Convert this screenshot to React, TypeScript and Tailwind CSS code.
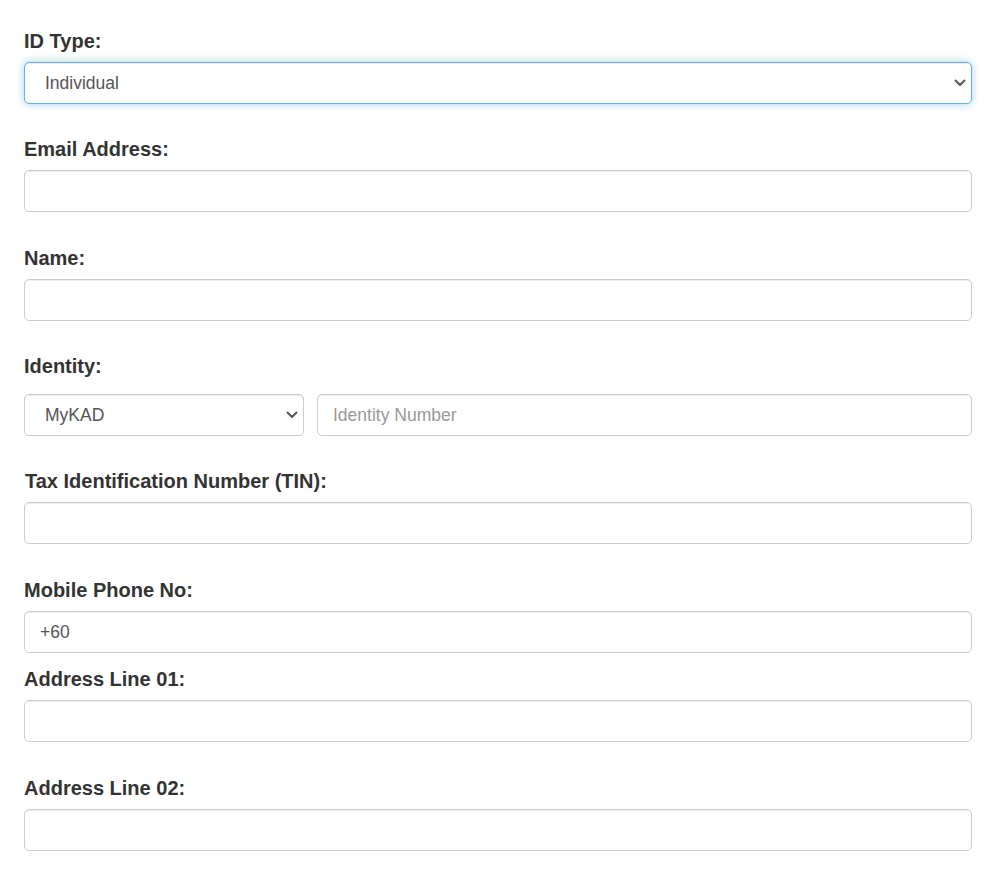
import React from "react";

const inputBase =
  "block w-full h-[42px] rounded-[5px] border border-[#cccccc] bg-white px-[15px] text-[17.5px] text-[#555555] outline-none shadow-[inset_0_1px_1px_rgba(0,0,0,0.075)] placeholder:text-[#999999]";

function Chevron() {
  return (
    <svg
      className="pointer-events-none absolute right-[6px] top-1/2 -translate-y-1/2"
      width="12"
      height="8"
      viewBox="0 0 12 8"
      fill="none"
    >
      <path d="M1.5 1.5 L6 6 L10.5 1.5" stroke="#555555" strokeWidth="2" strokeLinecap="round" strokeLinejoin="round" />
    </svg>
  );
}

function Select({ value, focus, className = "" }: { value: string; focus?: boolean; className?: string }) {
  return (
    <div className={"relative " + className}>
      <select
        defaultValue={value}
        className={
          "block w-full h-[42px] appearance-none rounded-[5px] border bg-white pl-[20px] pr-[30px] text-[17.5px] text-[#555555] outline-none " +
          (focus
            ? "border-[#66afe9] shadow-[inset_0_1px_1px_rgba(0,0,0,0.075),0_0_8px_rgba(102,175,233,0.6)]"
            : "border-[#cccccc] shadow-[inset_0_1px_1px_rgba(0,0,0,0.075)]")
        }
      >
        <option>{value}</option>
      </select>
      <Chevron />
    </div>
  );
}

function Label({ children, className = "" }: { children: React.ReactNode; className?: string }) {
  return <label className={"block text-[20px] font-bold leading-[28px] text-[#333333] " + className}>{children}</label>;
}

export default function App() {
  return (
    <div
      className="min-h-[877px] w-full bg-white pl-[24px] pr-[21px] pt-[27px]"
      style={{ fontFamily: '"Liberation Sans", Arial, sans-serif' }}
    >
      <div className="mb-[31px]">
        <Label className="mb-[7px]">ID Type:</Label>
        <Select value="Individual" focus />
      </div>

      <div className="mb-[32px]">
        <Label className="mb-[7px]">Email Address:</Label>
        <input className={inputBase} />
      </div>

      <div className="mb-[31px]">
        <Label className="mb-[7px]">Name:</Label>
        <input className={inputBase} />
      </div>

      <div className="mb-[31px]">
        <Label className="mb-[14px]">Identity:</Label>
        <div className="flex gap-[13px]">
          <Select value="MyKAD" className="w-[280px] shrink-0" />
          <input className={inputBase + " flex-1"} placeholder="Identity Number" />
        </div>
      </div>

      <div className="mb-[32px]">
        <Label className="mb-[7px] pl-px">Tax Identification Number (TIN):</Label>
        <input className={inputBase} />
      </div>

      <div className="mb-[12px]">
        <Label className="mb-[7px]">Mobile Phone No:</Label>
        <input className={inputBase} defaultValue="+60" />
      </div>

      <div className="mb-[32px]">
        <Label className="mb-[7px]">Address Line 01:</Label>
        <input className={inputBase} />
      </div>

      <div className="mb-[26px]">
        <Label className="mb-[7px]">Address Line 02:</Label>
        <input className={inputBase} />
      </div>
    </div>
  );
}
